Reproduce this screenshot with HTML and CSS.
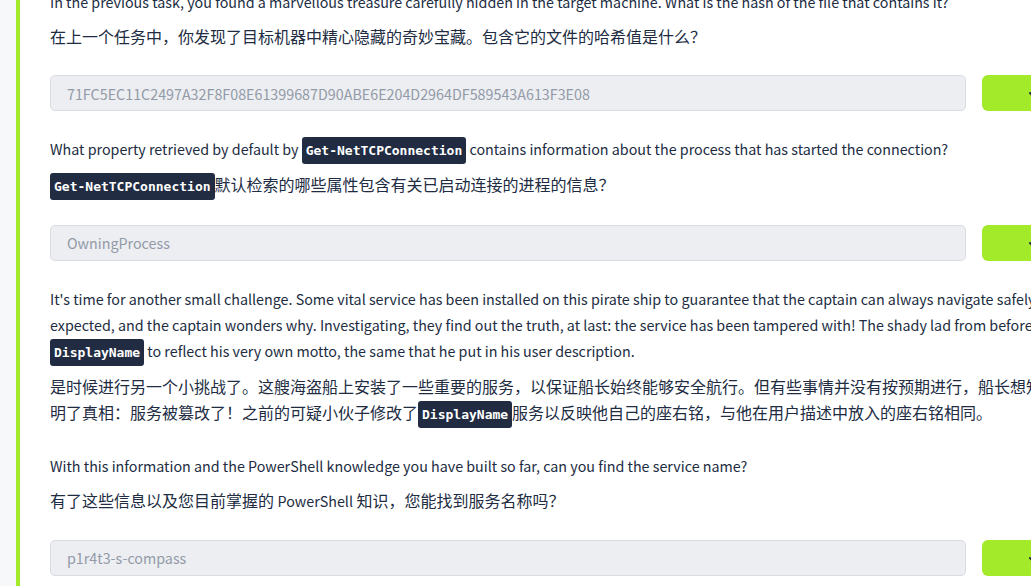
FILE: index.html
```html
<!DOCTYPE html>
<html lang="en">
<head>
<meta charset="utf-8">
<title>Task questions</title>
<link rel="stylesheet" href="styles.css">
</head>
<body>
<div class="page">
  <div class="rail"></div>
  <div class="accent"></div>
  <main class="content">
    <section class="question">
      <div class="question-text">
        <p class="en">In the previous task, you found a marvellous treasure carefully hidden in the target machine. What is the hash of the file that contains it?</p>
        <p class="zh">在上一个任务中，你发现了目标机器中精心隐藏的奇妙宝藏。包含它的文件的哈希值是什么？</p>
      </div>
      <div class="answer-row">
        <input class="answer" type="text" value="71FC5EC11C2497A32F8F08E61399687D90ABE6E204D2964DF589543A613F3E08" disabled>
        <button class="submit" type="button"><svg class="check" width="14" height="14" viewBox="0 0 14 14" aria-hidden="true"><polyline points="1,7 5,11 13,3" fill="none" stroke="#212c42" stroke-width="2" stroke-linecap="round" stroke-linejoin="round"/></svg>Correct Answer</button>
      </div>
    </section>

    <section class="question">
      <div class="question-text">
        <p class="en">What property retrieved by default by <code>Get-NetTCPConnection</code> contains information about the process that has started the connection?</p>
        <p class="zh"><code>Get-NetTCPConnection</code>默认检索的哪些属性包含有关已启动连接的进程的信息？</p>
      </div>
      <div class="answer-row">
        <input class="answer" type="text" value="OwningProcess" disabled>
        <button class="submit" type="button"><svg class="check" width="14" height="14" viewBox="0 0 14 14" aria-hidden="true"><polyline points="1,7 5,11 13,3" fill="none" stroke="#212c42" stroke-width="2" stroke-linecap="round" stroke-linejoin="round"/></svg>Correct Answer</button>
      </div>
    </section>

    <section class="question">
      <div class="question-text">
        <p class="en">It's time for another small challenge. Some vital service has been installed on this pirate ship to guarantee that the captain can always navigate safely. But something is not working as expected, and the captain wonders why. Investigating, they find out the truth, at last: the service has been tampered with! The shady lad from before has modified the service <code>DisplayName</code> to reflect his very own motto, the same that he put in his user description.</p>
        <p class="zh">是时候进行另一个小挑战了。这艘海盗船上安装了一些重要的服务，以保证船长始终能够安全航行。但有些事情并没有按预期进行，船长想知道为什么。经过调查，他们终于查明了真相：服务被篡改了！之前的可疑小伙子修改了<code>DisplayName</code>服务以反映他自己的座右铭，与他在用户描述中放入的座右铭相同。</p>
      </div>
    </section>

    <section class="question">
      <div class="question-text">
        <p class="en">With this information and the PowerShell knowledge you have built so far, can you find the service name?</p>
        <p class="zh">有了这些信息以及您目前掌握的 <span class="latin">PowerShell</span> 知识，您能找到服务名称吗？</p>
      </div>
      <div class="answer-row">
        <input class="answer" type="text" value="p1r4t3-s-compass" disabled>
        <button class="submit" type="button"><svg class="check" width="14" height="14" viewBox="0 0 14 14" aria-hidden="true"><polyline points="1,7 5,11 13,3" fill="none" stroke="#212c42" stroke-width="2" stroke-linecap="round" stroke-linejoin="round"/></svg>Correct Answer</button>
      </div>
    </section>
  </main>
</div>
</body>
</html>
```

FILE: styles.css
```css
html, body {
  margin: 0;
  padding: 0;
  background: #ffffff;
  overflow: hidden;
}

body {
  font-family: "Noto Sans CJK SC", "Noto Sans", sans-serif;
  font-size: 16px;
  line-height: 26px;
  color: #212c42;
}

.page {
  display: flex;
  align-items: stretch;
  min-height: 600px;
  width: 1290px;
}

.rail {
  width: 16px;
  flex: none;
  background: #f7f8fa;
}

.accent {
  width: 4px;
  flex: none;
  background: #a3ea2a;
}

.content {
  flex: none;
  width: 1240px;
  padding-left: 30px;
  margin-top: -11px;
}

.question-text {
  display: flex;
  flex-direction: column;
  gap: 8px;
  margin-bottom: 26px;
}

.question-text p {
  margin: 0;
}

.en {
  font-size: 14.3px;
}

.zh {
  font-size: 16px;
}

.latin {
  font-size: 14.3px;
}

code {
  display: inline-block;
  font-family: "DejaVu Sans Mono", monospace;
  font-weight: bold;
  font-size: 13px;
  line-height: 27px;
  padding: 0 4px;
  border-radius: 3px;
  background: #212c42;
  color: #ffffff;
  vertical-align: middle;
  margin-top: -2px;
  margin-bottom: -1px;
}

.answer-row {
  display: flex;
  gap: 16px;
  height: 36px;
  margin-bottom: 25px;
}

.answer {
  flex: 1;
  min-width: 0;
  box-sizing: border-box;
  height: 36px;
  padding: 0 16px;
  border: 1px solid #d8dbe1;
  border-radius: 5px;
  background: #eceef2;
  font-family: "Noto Sans CJK SC", "Noto Sans", sans-serif;
  font-size: 14.3px;
  color: #939aa7;
  -webkit-text-fill-color: #939aa7;
  opacity: 1;
}

.submit {
  flex: none;
  display: flex;
  align-items: center;
  gap: 8px;
  width: 308px;
  height: 36px;
  box-sizing: border-box;
  border: none;
  border-radius: 6px;
  background: #a3ea2a;
  padding: 0 0 0 47px;
  font-family: "Noto Sans CJK SC", "Noto Sans", sans-serif;
  font-size: 15px;
  font-weight: bold;
  color: #212c42;
}

.check {
  flex: none;
}
```
